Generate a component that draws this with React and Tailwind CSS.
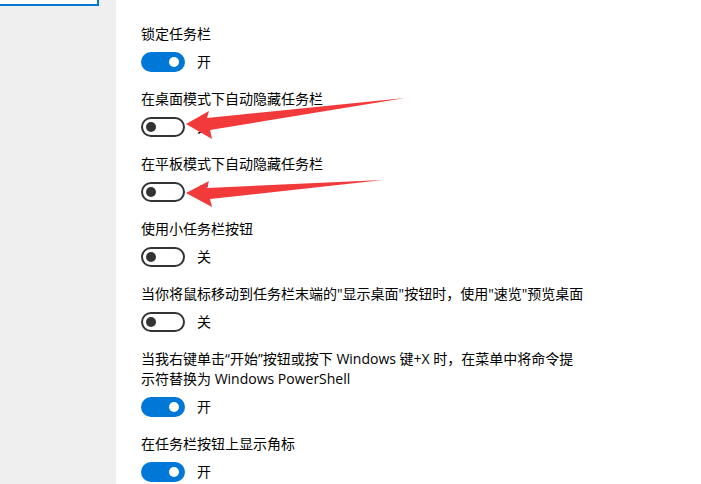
import React from 'react';

const items = [
  { label: ['锁定任务栏'], on: true },
  { label: ['在桌面模式下自动隐藏任务栏'], on: false },
  { label: ['在平板模式下自动隐藏任务栏'], on: false },
  { label: ['使用小任务栏按钮'], on: false },
  { label: ['当你将鼠标移动到任务栏末端的"显示桌面"按钮时，使用"速览"预览桌面'], on: false },
  {
    label: ['当我右键单击“开始”按钮或按下 Windows 键+X 时，在菜单中将命令提', '示符替换为 Windows PowerShell'],
    on: true,
  },
  { label: ['在任务栏按钮上显示角标'], on: true },
];

function Toggle({ on }) {
  if (on) {
    return (
      <div className="flex h-5 w-11 items-center justify-end rounded-full bg-[#0078d7] pr-[6px]">
        <div className="h-[10px] w-[10px] rounded-full bg-white" />
      </div>
    );
  }
  return (
    <div className="flex h-5 w-11 items-center rounded-full border-2 border-[#333] pl-[3px]">
      <div className="h-[10px] w-[10px] rounded-full bg-[#333]" />
    </div>
  );
}

export default function App() {
  return (
    <div
      className="relative flex h-[484px] w-[701px] overflow-hidden bg-white text-black"
      style={{ fontFamily: '"Open Sans", "Noto Sans CJK SC", sans-serif' }}
    >
      {/* sidebar */}
      <div className="w-[116px] shrink-0 bg-[#efefef]">
        <div className="h-[6px] w-[99px] border-b-2 border-r-2 border-[#0078d7] bg-white" />
      </div>

      {/* settings list */}
      <div className="flex flex-col pl-[25px] pt-[24px]">
        {items.map((item, i) => (
          <div key={i} className="mb-[17px] flex flex-col">
            <div className="text-[14px] leading-5">
              {item.label.map((line, j) => (
                <div key={j}>{line}</div>
              ))}
            </div>
            <div className="mt-2 flex items-center gap-3">
              <Toggle on={item.on} />
              <span className="text-[14px] leading-5">{item.on ? '开' : '关'}</span>
            </div>
          </div>
        ))}
      </div>

      {/* red arrows */}
      <svg className="pointer-events-none absolute left-0 top-0" width="701" height="484">
        <polygon
          points="186,124 209,111 207,118 405,98 210,130 212,139"
          fill="#f23a3a"
        />
        <polygon
          points="186,193 209,181 207,188 383,180 210,199 212,207"
          fill="#f23a3a"
        />
      </svg>
    </div>
  );
}
